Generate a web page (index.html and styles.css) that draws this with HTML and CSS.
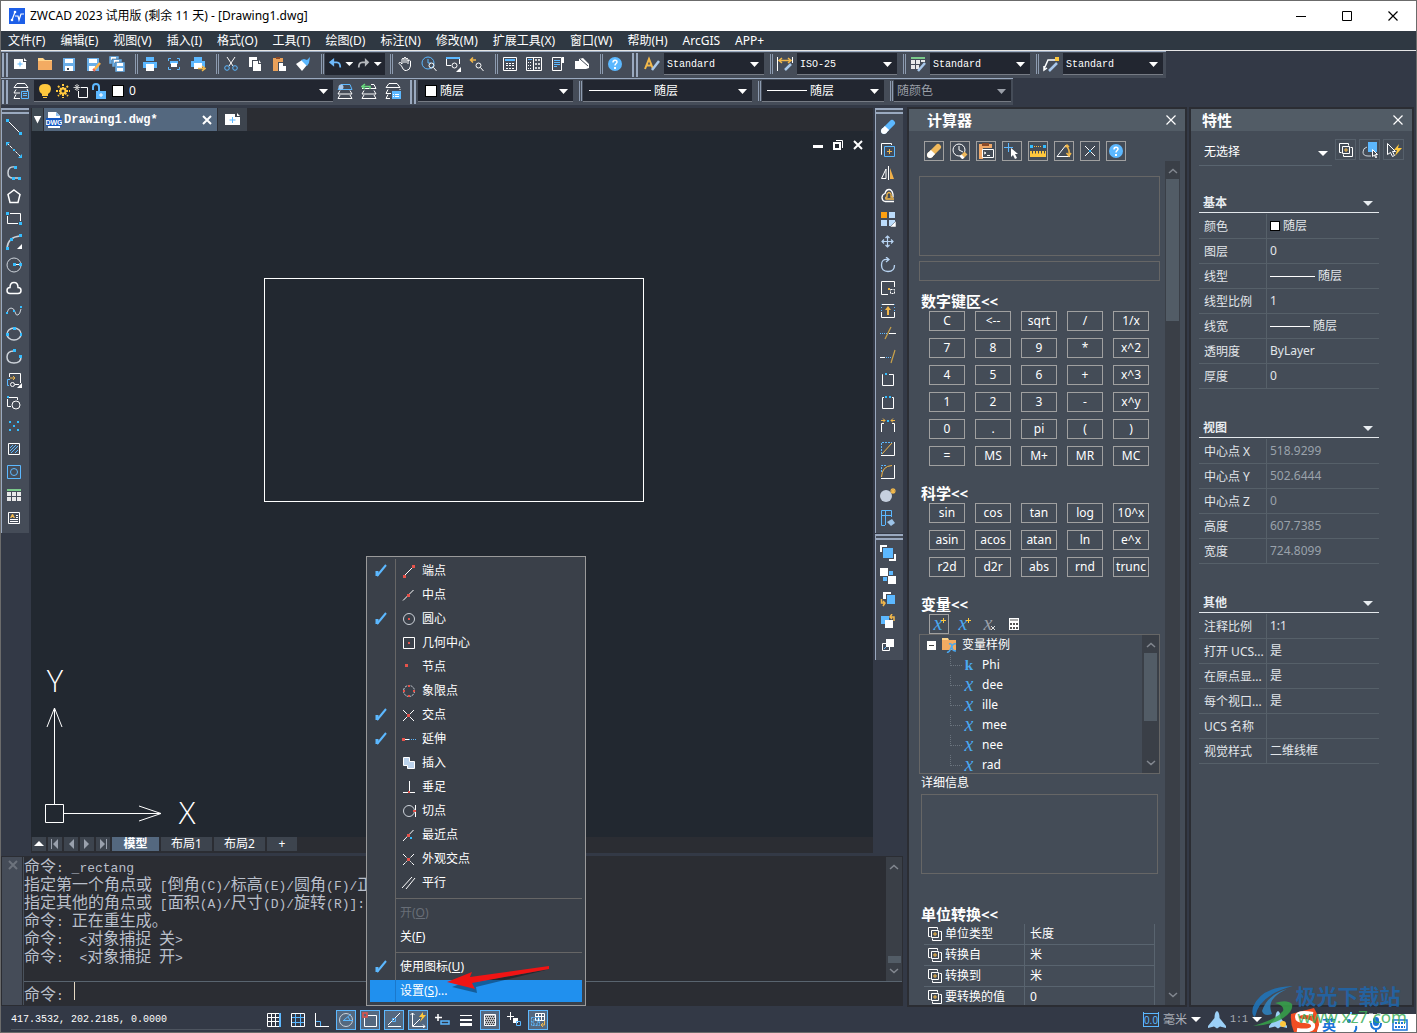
FILE: index.html
```html
<!DOCTYPE html>
<html lang="zh-CN">
<head>
<meta charset="utf-8">
<title>ZWCAD 2023 试用版 (剩余 11 天) - [Drawing1.dwg]</title>
<link rel="stylesheet" href="styles.css">
</head>
<body>
<svg class="defs" aria-hidden="true">
  <symbol id="i-plusboxes" viewBox="0 0 16 16"><path class="s" d="M3.500 10.500h-2v-9h9v2M12.500 5.500h2v9h-9v-2"/><path class="s" d="M4.500 4.500h7v7h-7z"/><path class="sy" d="M8 6v4M6 8h4"/></symbol>
  <symbol id="i-up" viewBox="0 0 10 6"><path d="M1 5l4-3.500 4 3.500" fill="none" stroke="#838890" stroke-width="1.500"/></symbol>
  <symbol id="i-down" viewBox="0 0 10 6"><path d="M1 1l4 3.500 4-3.500" fill="none" stroke="#838890" stroke-width="1.500"/></symbol>
  <symbol id="i-close" viewBox="0 0 12 12"><path d="M1.500 1.500l9 9M10.500 1.500l-9 9" fill="none" stroke="currentColor" stroke-width="1.200"/></symbol>
  <symbol id="i-check" viewBox="0 0 16 16"><path d="M4 8v5" fill="none" stroke="#5cb8ff" stroke-width="3"/><path d="M4 13L13 2" fill="none" stroke="#5cb8ff" stroke-width="2"/></symbol>
  <symbol id="i-printer" viewBox="0 0 16 16"><path class="fb" d="M4 1h8v4H4zM1 6h14v6H1z"/><path class="f" d="M4 8h8v7H4z"/></symbol>
  <symbol id="i-floppy" viewBox="0 0 16 16"><path fill="#6aaee8" d="M2 2h12v13H2z"/><path class="f" d="M4 3h8v4H4zM4 10h8v5H4z"/><path fill="#3d4551" d="M6 12h2v2H6z"/></symbol>
  <symbol id="i-help" viewBox="0 0 16 16"><circle class="fb" cx="8" cy="8" r="7"/><path class="s" stroke-width="1.500" d="M6 6.500c0-3 4-3 4-.5 0 1.500-2 1.500-2 3.500"/><path class="f" d="M7 11h2v2H7z"/></symbol>
  <symbol id="i-compass" viewBox="0 0 18 18"><path fill="#9cd0f7" d="M9 0c2 1 2.500 4 2.500 7l6.500 8v2l-6-1.500-3 2-3-2L0 17v-2l6.500-8C6.500 4 7 1 9 0z"/></symbol>
  <symbol id="i-gear" viewBox="0 0 16 16"><circle class="sb" stroke-width="2" cx="8" cy="8" r="4"/><path class="sb" stroke-width="2" d="M8 0v4M8 12v4M0 8h4M12 8h4M2.500 2.500l3 3M10.500 10.500l3 3M13.500 2.500l-3 3M5.500 10.500l-3 3"/></symbol>
</svg>

<div class="window">
  <header class="titlebar">
    <svg class="logo" viewBox="0 0 16 16"><path fill="#1d5fe8" d="M0 0h16v16H0z"/><path fill="none" stroke="#fff" stroke-width="1.200" d="M3 12l3-8M6 8h3l1 4 2-6h3"/><circle class="f" cx="6" cy="4" r="1.300"/><circle class="f" cx="3" cy="12" r="1.300"/></svg>
    <h1>ZWCAD 2023 试用版 (剩余 11 天) - [Drawing1.dwg]</h1>
    <div class="winbtns">
      <button aria-label="最小化"><svg viewBox="0 0 12 12"><path d="M1 6.500h10" stroke="#000"/></svg></button>
      <button aria-label="最大化"><svg viewBox="0 0 12 12"><path d="M1.500 1.500h9v9h-9z" fill="none" stroke="#000"/></svg></button>
      <button aria-label="关闭"><svg><use href="#i-close"/></svg></button>
    </div>
  </header>
  <nav class="menubar">
    <a href="#">文件(F)</a><a href="#">编辑(E)</a><a href="#">视图(V)</a><a href="#">插入(I)</a><a href="#">格式(O)</a><a href="#">工具(T)</a><a href="#">绘图(D)</a><a href="#">标注(N)</a><a href="#">修改(M)</a><a href="#">扩展工具(X)</a><a href="#">窗口(W)</a><a href="#">帮助(H)</a><a href="#">ArcGIS</a><a href="#">APP+</a>
  </nav>

  <div class="toolbar">
    <i class="grip"></i>
    <button aria-label="新建"><svg viewBox="0 0 16 16"><path class="f" d="M1 3h9v3h3v7H1zM11 2l3 3h-3z"/><path stroke="#5cb8ff" d="M7 5.500v5M4.500 8h5"/></svg></button>
    <button aria-label="打开"><svg viewBox="0 0 16 16"><path fill="#ffd48a" d="M1 2h5l2 2h7v3H1z"/><path fill="#f3ab62" d="M1 5h14v9H1z"/></svg></button>
    <button aria-label="保存"><svg><use href="#i-floppy"/></svg></button>
    <button aria-label="另存为"><svg viewBox="0 0 16 16"><path fill="#6aaee8" d="M2 2h12v13H2z"/><path class="f" d="M4 3h8v4H4zM4 10h6v5H4z"/><path d="M9 14l6-7" stroke="#ffb347" stroke-width="2.500"/><path d="M8 13l2 2" stroke="#e65" stroke-width="2"/></svg></button>
    <button aria-label="全部保存"><svg viewBox="0 0 16 16"><path fill="#6aaee8" stroke="#454c58" stroke-width=".5" d="M0 0h10v8H0z"/><path class="f" d="M2 1h5v3H2z"/><path fill="#6aaee8" stroke="#454c58" stroke-width=".5" d="M3 3h10v8H3z"/><path class="f" d="M5 4h5v3H5z"/><path fill="#6aaee8" stroke="#454c58" stroke-width=".5" d="M6 6h10v10H6z"/><path class="f" d="M8 7h6v3H8zM8 12h6v3H8z"/></svg></button>
    <i class="sep"></i>
    <button aria-label="打印"><svg><use href="#i-printer"/></svg></button>
    <button aria-label="打印预览"><svg viewBox="0 0 16 16"><path class="sb" d="M2.500 5V2.500H5M11 2.500h2.500V5M2.500 11v2.500H5M11 13.500h2.500V11"/><path class="fb" d="M4 5h8v3H4z"/><path class="f" d="M5 7h6v4H5z"/></svg></button>
    <button aria-label="发布"><svg viewBox="0 0 16 16"><path class="fb" d="M4 1h8v4H4zM1 5h14v6H1z"/><path class="f" d="M4 7h8v6H4z"/><path class="sy" stroke-width="1.500" d="M8 12.500h6M12 10l3 2.500-3 2.500"/></svg></button>
    <i class="sep"></i>
    <button aria-label="剪切"><svg viewBox="0 0 16 16"><path class="s" d="M4 1l6 9M12 1L6 10"/><circle class="sb" cx="4" cy="12" r="2.300"/><circle class="sb" cx="12" cy="12" r="2.300"/></svg></button>
    <button aria-label="复制"><svg viewBox="0 0 16 16"><path class="f" d="M2 1h8v3H5v7H2zM6 5h5v3h3v7H6zM12 4l2 3h-2z"/></svg></button>
    <button aria-label="粘贴"><svg viewBox="0 0 16 16"><path fill="#e9a15a" d="M2 2h10v4H7v9H2z"/><path fill="#8a4a2a" d="M5 1h4v2H5z"/><path class="f" d="M8 7h4v3h3v5H8z"/></svg></button>
    <button aria-label="格式刷"><svg viewBox="0 0 16 16"><path class="f" d="M1 8l6-4 5 5-5 6z"/><path class="fb" d="M6 4l3-1 3 1 3-3-1 6-2 3z"/></svg></button>
    <i class="sep"></i>
    <div class="undo">
      <button aria-label="撤销"><svg viewBox="0 0 16 16"><path d="M3 6h7q4 0 4 6" fill="none" stroke="#6fb9fb" stroke-width="2"/><path fill="#6fb9fb" d="M7 1v10L1 6z"/></svg></button><i class="tri"></i>
      <button aria-label="重做"><svg viewBox="0 0 16 16"><path d="M12 6H6q-4 0-4 6" fill="none" stroke="#b5b8bd" stroke-width="2"/><path fill="#b5b8bd" d="M9 1v10l5-5z"/></svg></button><i class="tri"></i>
    </div>
    <i class="sep"></i>
    <button aria-label="平移"><svg viewBox="0 0 16 16"><path class="s" d="M4.500 10L2 7.500Q2 6 3.500 6.500L5 8V3q1-1.500 2 0V2q1-1.500 2 0v1q1-1.500 2 0v2q2-1.500 2.500 0v5q-.5 4-4 4.500H8Q6 14 4.500 10zM7 3v4M9 3v4M11 4v4"/></svg></button>
    <button aria-label="实时缩放"><svg viewBox="0 0 16 16"><circle class="sb" cx="7" cy="7" r="6"/><path class="sb" d="M7 3v4h3"/><circle class="s" cx="10.500" cy="9.500" r="2.500"/><path class="s" d="M12.500 11.500l3 3.500"/></svg></button>
    <button aria-label="窗口缩放"><svg viewBox="0 0 16 16"><path class="fb" d="M1 1h14v2H1z"/><path class="s" d="M1.500 3v6.500H6M14.500 3v5"/><circle class="s" cx="9.500" cy="9.500" r="2.500"/><path class="f" d="M16 11v5h-5z"/></svg></button>
    <button aria-label="缩放上一个"><svg viewBox="0 0 16 16"><path class="sy" stroke-width="1.500" d="M7 4H2M4 1.500L1.500 4 4 6.500"/><circle class="s" cx="9.500" cy="9.500" r="2.500"/><path class="s" d="M11.500 11.500l3 3.500"/></svg></button>
    <i class="sep"></i>
    <button aria-label="特性"><svg viewBox="0 0 16 16"><path class="s" d="M1.500 1.500h13v13h-13z"/><path class="fb" d="M3 3h10v2H3z"/><path d="M4 7.500h8M4 9.500h8M4 12.500h8" stroke="#fff" stroke-dasharray="2 1"/></svg></button>
    <button aria-label="设计中心"><svg viewBox="0 0 16 16"><path class="s" d="M.5 1.500h15v13H.5zM7.500 1v14"/><path class="sb" d="M2 3.500h4"/><path d="M2 6.500h4M2 9.500h4M2 12.500h4" stroke="#fff" stroke-dasharray="1 1"/><path class="s" d="M9.500 3.500h1v1h-1zM12.500 3.500h1v1h-1zM9.500 7.500h1v1h-1zM12.500 7.500h1v1h-1zM9.500 11.500h1v1h-1zM12.500 11.500h1v1h-1z"/></svg></button>
    <button aria-label="工具选项板"><svg viewBox="0 0 16 16"><path class="s" d="M2.500 1.500h9v13h-9z"/><path class="sb" d="M4 4.500h6M4 6.500h6M4 8.500h6M4 10.500h3"/><path class="f" d="M12 1h2v6h-2z"/></svg></button>
    <button aria-label="计算器"><svg viewBox="0 0 16 16"><path class="f" d="M1 5h4V3l4-1 6 6v4l-3 1H1z"/><path stroke="#454c58" d="M6 3l8 7"/></svg></button>
    <i class="sep"></i>
    <button aria-label="帮助"><svg><use href="#i-help"/></svg></button>
    <i class="grip"></i>
    <span class="cell"><svg viewBox="0 0 16 16"><path class="sy" stroke-width="2" d="M1 13L5 3l4 10M2 9.500h6"/><path d="M8 14l7-9" stroke="#a9c8ea" stroke-width="2.500"/></svg></span>
    <span class="combo mono w100"><select aria-label="文字样式"><option>Standard</option></select></span>
    <i class="sep"></i>
    <span class="cell"><svg viewBox="0 0 16 16"><path class="s" d="M.5 1v14M15.500 1v6"/><path class="sy" stroke-width="1.500" d="M2 4.500h12M5 2L2 4.500 5 7M11 2l3 2.500L11 7"/><path d="M8 14l6-6" stroke="#a9c8ea" stroke-width="2.500"/></svg></span>
    <span class="combo mono w100"><select aria-label="标注样式"><option>ISO-25</option></select></span>
    <i class="sep"></i>
    <span class="cell"><svg viewBox="0 0 16 16"><path fill="#7bc98a" d="M1 1h14v2H1z"/><path fill="#e8e8e8" d="M1 4h4v4H1zM6 4h4v4H6zM11 4h4v2h-4zM1 9h4v4H1zM6 9h3v4H6z"/><path d="M8 15l7-8" stroke="#a9c8ea" stroke-width="2.500"/></svg></span>
    <span class="combo mono w100"><select aria-label="表格样式"><option>Standard</option></select></span>
    <i class="sep"></i>
    <span class="cell"><svg viewBox="0 0 16 16"><path class="s" stroke-width="1.500" d="M1 13l4-9h7M1 10v4l3-2"/><path fill="#ffc83d" d="M12 1h4v4h-4z"/><path d="M6 15l8-8" stroke="#a9c8ea" stroke-width="2.500"/></svg></span>
    <span class="combo mono w100"><select aria-label="多重引线样式"><option>Standard</option></select></span>
  </div>

  <div class="toolbar second">
    <i class="grip"></i>
    <button aria-label="图层特性"><svg viewBox="0 0 16 16"><path class="s" d="M4 .5h8l3 4H1zM3 6.500l-2 3.500h6M14 6l1 2M3 11.500l-2 4h6"/><path class="sb" fill="#454c58" d="M8.500 8.500h7v7h-7zM10 10.500h4M10 12.500h4"/></svg></button>
    <span class="combo wlayer">
      <svg viewBox="0 0 16 16"><path fill="#ffc83d" d="M8 1q6 0 6 5 0 3-3 5v2H5v-2Q2 9 2 6q0-5 6-5zM6 14h4v1H6z"/></svg>
      <svg viewBox="0 0 16 16"><circle cx="8" cy="8" r="2.500" fill="none" stroke="#ffc83d" stroke-width="2"/><path stroke="#ffc83d" stroke-width="2" stroke-dasharray="2 1" d="M8 1v4M8 11v4M1 8h4M11 8h4M3 3l3 3M10 10l3 3M13 3l-3 3M6 10l-3 3"/></svg>
      <svg viewBox="0 0 16 16"><path class="s" d="M8 4.500h6.500v10H5.500V8"/><path stroke="#ccc" d="M4 1v7M.5 4.500h7M2 2l4 5M6 2L2 7"/></svg>
      <svg viewBox="0 0 16 16"><path class="sb" stroke-width="2" d="M2 7V4q0-3 3-3t3 3v4"/><path class="fb" d="M5 8h10v8H5z"/><path class="s" d="M10 10v4M8 12h4"/></svg>
      <i class="swatch"></i>
      <select aria-label="图层"><option>0</option></select>
    </span>
    <button aria-label="将对象的图层置为当前"><svg viewBox="0 0 16 16"><path class="s" d="M3 7.500l-2 3.500h14l-2-3.500M3 12l-2 3.500h14L13 12"/><path class="sb" d="M4 1.500h9l2 5H1z"/><circle cx="4" cy="4" r="2.500" fill="#a9c8ea"/></svg></button>
    <button aria-label="上一个图层"><svg viewBox="0 0 16 16"><path class="s" d="M10 1.500h3l2 4H1M3 7.500L1 11h14l-2-3.500M3 12l-2 3.500h14L13 12"/><path stroke="#67d67c" stroke-width="1.500" fill="none" d="M9 6V3.500H1M4 1L1 3.500 4 6"/></svg></button>
    <button aria-label="图层状态"><svg viewBox="0 0 16 16"><path class="s" d="M4 .5h8l3 4H1zM3 6.500l-2 4h5M15 6v1M3 11.500l-2 4h4"/><path class="fb" d="M7 8h9v8H7z"/><path stroke="#fff" stroke-dasharray="1 1 4" d="M8 11.500h7M8 13.500h7"/></svg></button>
    <i class="grip"></i>
    <span class="combo wcolor"><i class="swatch"></i><select aria-label="颜色"><option>随层</option></select></span>
    <i class="sep"></i>
    <span class="combo wline"><i class="rule long"></i><select aria-label="线型"><option>随层</option></select></span>
    <i class="sep"></i>
    <span class="combo wweight"><i class="rule"></i><select aria-label="线宽"><option>随层</option></select></span>
    <i class="sep"></i>
    <span class="combo wplot"><select aria-label="打印样式" disabled><option>随颜色</option></select></span>
  </div>

  <main class="main">
    <div class="work">
      <div class="upper">
        <aside class="side">
          <div class="vbar">
            <button aria-label="直线"><svg viewBox="0 0 16 16"><path class="s" d="M1 1l13 13"/><path class="fc" d="M0 0h3v3H0zM13 13h3v3h-3z"/></svg></button>
            <button aria-label="构造线"><svg viewBox="0 0 16 16"><path class="s" stroke-dasharray="3 1" d="M1 1l14 14"/><path class="fc" d="M0 0h4L0 4zM16 16h-4l4-4zM7 7h2v2H7z"/></svg></button>
            <button aria-label="多段线"><svg viewBox="0 0 16 16"><path class="s g" stroke-width="1.500" d="M9 2Q2 1 2 8q0 5 5 5h7"/><path class="fc" d="M8 1h3v3H8zM6 12h3v3H6zM12 12h3v3h-3z"/></svg></button>
            <button aria-label="正多边形"><svg viewBox="0 0 16 16"><path class="s" stroke-width="1.500" d="M8 2l6 4.500L12 14.500H4L2 6.500z"/></svg></button>
            <button aria-label="矩形"><svg viewBox="0 0 16 16"><path class="s" d="M4 2.500h10.500V10M12 12.500H1.500V5"/><path class="fc" d="M0 1h3v3H0zM13 11h3v3h-3z"/></svg></button>
            <button aria-label="圆弧"><svg viewBox="0 0 16 16"><path class="s g" stroke-width="1.500" d="M1 14Q2 3 14 2"/><path class="fc" d="M0 13h3v3H0zM4 4h3v3H4zM13 0h3v3h-3z"/><path class="f" d="M16 10v5h-5z"/></svg></button>
            <button aria-label="圆"><svg viewBox="0 0 16 16"><circle class="s g" cx="8" cy="8" r="7"/><path class="s" d="M8 7.500h6"/><path class="fc" d="M7 6h3v3H7zM13 6h3v3h-3z"/></svg></button>
            <button aria-label="修订云线"><svg viewBox="0 0 16 16"><path class="s" stroke-width="1.500" d="M4 13.500q-3 0-3-3T4 7.500q0-5 4-5t4 5q3 0 3 3t-3 3z"/></svg></button>
            <button aria-label="样条曲线"><svg viewBox="0 0 16 16"><path class="s g" d="M1 10q1-5 4-5 3 0 4 4t3 3 3-6"/><path class="fc" d="M0 9h2v2H0zM7 7h2v2H7zM14 3h2v2h-2z"/></svg></button>
            <button aria-label="椭圆"><svg viewBox="0 0 16 16"><ellipse class="s g" stroke-width="1.500" cx="8" cy="8" rx="7" ry="6"/><path class="fc" d="M7 1h3v3H7zM0 7h3v3H0zM14 7h2v3h-2z"/></svg></button>
            <button aria-label="椭圆弧"><svg viewBox="0 0 16 16"><path class="s g" stroke-width="1.500" d="M8 2Q1 2 1 8t7 6 7-6"/><path class="fc" d="M7 0h3v3H7zM13 6h3v3h-3z"/></svg></button>
            <button aria-label="插入块"><svg viewBox="0 0 16 16"><path class="s" d="M3.500 5V1.500h11V11"/><path class="sb" d="M4 7.500H1.500v6H3"/><path class="sy" d="M4 6h5M7 4l2 2-2 2"/><circle class="s" cx="6.500" cy="12.500" r="2"/><path class="s" d="M9 12.500h4"/><path class="f" d="M16 11v5h-5z"/></svg></button>
            <button aria-label="创建块"><svg viewBox="0 0 16 16"><path class="s" d="M3 2.500h8.500V5M1.500 4v7.500H5"/><circle class="s" cx="10" cy="10" r="4"/><path class="fc" d="M1 1h2v2H1z"/></svg></button>
            <button aria-label="点"><svg viewBox="0 0 16 16"><path class="fc" d="M3 3h2v2H3zM11 3h2v2h-2zM7 7h2v2H7zM3 11h2v2H3zM11 11h2v2h-2z"/></svg></button>
            <button aria-label="图案填充"><svg viewBox="0 0 16 16"><path class="s" d="M2.500 2.500h11v11h-11z"/><path class="sb" d="M4 7l3-3M4 10l6-6M5 12l7-7M9 12l3-3"/></svg></button>
            <button aria-label="边界"><svg viewBox="0 0 16 16"><path class="sb" d="M1.500 1.500h13v13h-13z"/><circle class="sb" cx="8" cy="8" r="3.500"/></svg></button>
            <button aria-label="表格"><svg viewBox="0 0 16 16"><path fill="#7bc98a" d="M1 2h14v2H1z"/><path fill="#e8e8e8" d="M1 5h4v4H1zM6 5h4v4H6zM11 5h4v4h-4zM1 10h4v4H1zM6 10h4v4H6zM11 10h4v4h-4z"/></svg></button>
            <button aria-label="多行文字"><svg viewBox="0 0 16 16"><path class="s" d="M2.500 2.500h11v11h-11z"/><path class="fy" d="M4 8l2-4h1l2 4H7.500L7 7H6l-.5 1z"/><path class="s" d="M10 5.500h2M10 7.500h2M4 9.500h8M4 11.500h8"/></svg></button>
          </div>
        </aside>

        <section class="doc">
          <div class="doctabs">
            <button class="listbtn" aria-label="文档列表"><i class="tri tall"></i></button>
            <div class="doctab">
              <svg viewBox="0 0 16 16"><path class="f" d="M2 0h8l4 4v12H2z"/><path fill="#8ec0f0" d="M10 0l4 4h-4z"/><path fill="#1358c4" d="M0 6h16v8H0z"/><text class="dwg" x="8" y="13">DWG</text></svg>
              <span>Drawing1.dwg*</span>
              <button aria-label="关闭文档"><svg viewBox="0 0 12 12"><path d="M2 2l8 8M10 2l-8 8" stroke="#fff" stroke-width="2"/></svg></button>
            </div>
            <button class="newtab" aria-label="新建文档"><svg viewBox="0 0 16 16"><path class="f" d="M0 2h10v3h5v8H0zM12 1l3 3h-3z"/><path stroke="#5cb8ff" d="M7.500 5v6M4.500 8h6"/></svg></button>
          </div>
          <div class="canvas">
            <svg class="drawing" width="100%" height="100%">
              <rect class="s" x="233.500" y="147.500" width="379" height="223"/>
              <svg y="100%" overflow="visible">
                <path class="s" d="M14.500 -32.500h18v18h-18zM23.500 -33v-96M16 -110l7.500 -19 7.500 19M33 -23.500h97M108 -31l22 7.500 -22 7.500"/>
                <text class="axis" x="24" y="-145">Y</text>
                <text class="axis" x="156" y="-13">X</text>
              </svg>
            </svg>
            <div class="mdi">
              <button aria-label="最小化文档"><svg viewBox="0 0 12 12"><path class="f" d="M1 6h10v3H1z"/></svg></button>
              <button aria-label="还原文档"><svg viewBox="0 0 12 12"><path fill="none" stroke="#fff" stroke-width="2" d="M2 4h6v6H2z"/><path class="s" d="M4 1.500h6.500V9"/></svg></button>
              <button aria-label="关闭文档窗口"><svg viewBox="0 0 12 12"><path d="M2 2l8 8M10 2l-8 8" stroke="#fff" stroke-width="2"/></svg></button>
            </div>
          </div>
          <div class="layouts">
            <button class="nav" aria-label="展开"><svg viewBox="0 0 10 10"><path class="f" d="M5 2l5 5H0z"/></svg></button>
            <button class="nav" aria-label="第一个"><svg viewBox="0 0 10 10"><path d="M1 0h1v10H1zM8 0v10L3 5z"/></svg></button>
            <button class="nav" aria-label="上一个"><svg viewBox="0 0 10 10"><path d="M8 0v10L3 5z"/></svg></button>
            <button class="nav" aria-label="下一个"><svg viewBox="0 0 10 10"><path d="M2 0v10l5-5z"/></svg></button>
            <button class="nav" aria-label="最后一个"><svg viewBox="0 0 10 10"><path d="M8 0h1v10H8zM2 0v10l5-5z"/></svg></button>
            <button class="lay on">模型</button><button class="lay">布局1</button><button class="lay">布局2</button><button class="lay add">+</button>
          </div>
        </section>

        <aside class="side">
          <div class="vbar">
            <button aria-label="删除"><svg viewBox="0 0 16 16"><path d="M4 12l8-8" stroke="#5cb8ff" stroke-width="6" stroke-linecap="round"/><path d="M4 12l3-3" stroke="#fff" stroke-width="6"/><circle class="f" cx="4" cy="12" r="3"/></svg></button>
            <button aria-label="复制对象"><svg viewBox="0 0 16 16"><path class="s" d="M2 12.500h-.5v-11h10V3"/><path class="sb" d="M4.500 4.500h10v10h-10z"/><path class="sy" d="M9.500 7v5M7 9.500h5"/></svg></button>
            <button aria-label="镜像"><svg viewBox="0 0 16 16"><path class="s" d="M1.500 13.500H6V4zM8.500 1v14"/><path fill="#f0b04a" d="M10 3l4 11h-4z"/></svg></button>
            <button aria-label="偏移"><svg viewBox="0 0 16 16"><path class="s" stroke-width="1.300" d="M14 13.500H5q-3-1-3-4t3-4q1-4 4-4t4 5v3"/><path class="sy" stroke-width="1.300" d="M14 11H6q-1-2 1-2V6q1-1.500 2-1.500T11 6v3h2"/></svg></button>
            <button aria-label="阵列"><svg viewBox="0 0 16 16"><path fill="#ffa010" d="M1 1h6v6H1z"/><path fill="#bcdcfb" d="M9 1h6v6H9zM1 9h6v6H1zM9 9h6v6H9z"/><path class="f" stroke="#454c58" stroke-width=".5" d="M16 10v6h-6z"/></svg></button>
            <button aria-label="移动"><svg viewBox="0 0 16 16"><path fill="none" stroke="#b8d4f2" stroke-width="1.200" d="M7.500 2v11M2 7.500h11M5.500 4l2-2 2 2M5.500 11l2 2 2-2M4 5.500l-2 2 2 2M11 5.500l2 2-2 2"/></svg></button>
            <button aria-label="旋转"><svg viewBox="0 0 16 16"><path fill="none" stroke="#b8d4f2" stroke-width="1.300" d="M14.500 8q0 6.500-6.500 6.500T1.500 8 8 2.500M6 0l3 2.500L6 5"/></svg></button>
            <button aria-label="缩放"><svg viewBox="0 0 16 16"><path class="s" d="M8 14.500H1.500v-13h13V7"/><path class="s" stroke-dasharray="2 1" d="M10.500 9.500h4v4h-4z"/><path class="fy" d="M8 8h2v2H8z"/></svg></button>
            <button aria-label="拉伸"><svg viewBox="0 0 16 16"><path class="s" d="M1.500 9v5.500h13V9"/><path class="sb" stroke-dasharray="1 2" d="M1.500 8V1.500M14.500 8V1.500"/><path class="s" d="M2 1.500h12"/><path class="fy" d="M8 3l3 4H9v5H7V7H5z"/></svg></button>
            <button aria-label="修剪"><svg viewBox="0 0 16 16"><path class="sb" stroke-dasharray="1 1" d="M0 7.500h8"/><path class="s" d="M9 7.500h7"/><path d="M5 13L11 1" stroke="#c8a14b" stroke-width="1.200"/></svg></button>
            <button aria-label="延伸"><svg viewBox="0 0 16 16"><path class="s" d="M0 8.500h5"/><path class="sb" stroke-dasharray="1 1" d="M6 8.500h5"/><path d="M11 14l4-13" stroke="#c8a14b" stroke-width="1.200"/></svg></button>
            <button aria-label="打断于点"><svg viewBox="0 0 16 16"><path class="s" d="M3 2.500h-.5v11h11v-11H9"/><path class="fc" d="M5 1h2v2H5z"/></svg></button>
            <button aria-label="打断"><svg viewBox="0 0 16 16"><path class="s" d="M4 2.500H2.500v11h11v-11H12"/><path class="fc" d="M5 1h2v2H5zM9 1h2v2H9z"/></svg></button>
            <button aria-label="合并"><svg viewBox="0 0 16 16"><path class="s" d="M1.500 14V5.500H4M14.500 14V5.500H12"/><path class="sy" d="M1 2.500h4M3 .5l2 2-2 2M15 2.500h-4M13 .5l-2 2 2 2"/><path class="fc" d="M7 2h2v2H7z"/></svg></button>
            <button aria-label="倒角"><svg viewBox="0 0 16 16"><path class="sb" stroke-dasharray="2 1" d="M1.500 13V1.500H12"/><path class="s" d="M1 14.500h13.500V1"/><path class="sy" d="M2 13L12 2"/></svg></button>
            <button aria-label="圆角"><svg viewBox="0 0 16 16"><path class="sb" stroke-dasharray="2 1" d="M1.500 8V1.500H6"/><path class="s" d="M1 14.500h13.500V1"/><path class="sy" d="M1.500 13Q2 2 12 1.500"/></svg></button>
            <button aria-label="分解"><svg viewBox="0 0 16 16"><circle cx="6" cy="9" r="6" fill="#c6d0df"/><path class="sy" stroke-width="1.200" d="M13 1v6M10 4h6M11 2l4 4M15 2l-4 4"/></svg></button>
            <button aria-label="特性匹配"><svg viewBox="0 0 16 16"><path class="sb" d="M5 15.500H1.500v-15h10V7M1.500 5.500h10M5.500 1v14"/><path fill="#9cc3e8" d="M7 12l5-3 3 4-4 3z"/></svg></button>
          </div>
          <div class="vbar">
            <button aria-label="前置"><svg viewBox="0 0 16 16"><path stroke="#fff" stroke-width="2" fill="none" d="M1 7V1h6M9 15h6V9"/><path class="fb" d="M3 3h10v10H3z"/></svg></button>
            <button aria-label="后置"><svg viewBox="0 0 16 16"><path class="f" d="M0 0h8v8H0zM8 8h8v8H8z"/><path class="fb" d="M9 3h4v4H9zM3 9h4v4H3z"/></svg></button>
            <button aria-label="置于对象之上"><svg viewBox="0 0 16 16"><path class="f" d="M3 1h8v2H6v5H3z"/><path class="fb" d="M7 4h8v9H7z"/><path class="sy" stroke-width="1.500" d="M1.500 8v4H5M3 10l2 2-2 3"/></svg></button>
            <button aria-label="置于对象之下"><svg viewBox="0 0 16 16"><path class="fb" d="M1 2h8v8H1z"/><path class="f" d="M5 6h8v8H5z"/><path class="sy" stroke-width="1.500" d="M14 7V3h-3M12 0l-2 3 2 2"/></svg></button>
            <button aria-label="文字前置"><svg viewBox="0 0 16 16"><path class="s" d="M6 6.500H2.500v7h7V10"/><path class="sb" d="M4 12l4-4"/><path class="f" d="M6 2h8v8H6z"/></svg></button>
          </div>
        </aside>
      </div>

      <section class="command">
        <div class="cmdclose"><button aria-label="关闭命令行"><svg viewBox="0 0 12 12"><path d="M2 2l8 8M10 2l-8 8" stroke="#6d737d" stroke-width="2"/></svg></button></div>
        <div class="cmdbody">
          <div class="history">
            <div class="lines">
              <p>命令<code>: _rectang</code></p>
              <p>指定第一个角点或<code> [</code>倒角<code>(C)/</code>标高<code>(E)/</code>圆角<code>(F)/</code>正</p>
              <p>指定其他的角点或<code> [</code>面积<code>(A)/</code>尺寸<code>(D)/</code>旋转<code>(R)]:</code></p>
              <p>命令<code>: </code>正在重生成。</p>
              <p>命令<code>:  &lt;</code>对象捕捉<code> </code>关<code>&gt;</code></p>
              <p>命令<code>:  &lt;</code>对象捕捉<code> </code>开<code>&gt;</code></p>
            </div>
            <div class="scroll"><svg><use href="#i-up"/></svg><i class="space"></i><i class="thumb tiny"></i><svg><use href="#i-down"/></svg></div>
          </div>
          <div class="prompt"><label for="cmd">命令<code>:</code></label><i class="caret"></i><input id="cmd" type="text"></div>
        </div>
      </section>
    </div>

    <section class="panel calc">
      <header><h2>计算器</h2><button aria-label="关闭计算器"><svg><use href="#i-close"/></svg></button></header>
      <div class="calcwrap">
        <div class="calcbody">
          <div class="calctools">
            <button aria-label="清除"><svg viewBox="0 0 16 16"><path d="M4 12l8-8" stroke="#f0b95c" stroke-width="6" stroke-linecap="round"/><path d="M4 12l3-3" stroke="#fff" stroke-width="6"/><circle class="f" cx="4" cy="12" r="3"/></svg></button>
            <button aria-label="清除历史"><svg viewBox="0 0 16 16"><circle class="s" cx="7" cy="7" r="6"/><path class="s" d="M7 3v4l4 2"/><path d="M10 14l4-4" stroke="#f0b95c" stroke-width="4"/><path d="M9 15l2-2" stroke="#fff" stroke-width="4"/></svg></button>
            <button aria-label="粘贴到命令行"><svg viewBox="0 0 16 16"><path fill="#f0a868" d="M1 1h13v4H5v11H1z"/><path fill="#8a4a2a" d="M4 0h7v3H4z"/><path class="s" fill="#3a4049" d="M4.500 6.500h11v8h-11zM6 9l2 1-2 1M9 12.500h3"/></svg></button>
            <button aria-label="获取坐标"><svg viewBox="0 0 16 16"><path class="sb" d="M4.500 0v9M0 4.500h9"/><path class="f" d="M7 5v9l2-2 2 4 2-1-2-4h3z"/></svg></button>
            <button aria-label="两点之间的距离"><svg viewBox="0 0 16 16"><path class="fc" d="M0 2h3v3H0zM13 2h3v3h-3z"/><path class="sy" stroke-dasharray="1 1" d="M4 3.500h8"/><path fill="#ffc83d" d="M0 8h16v6H0z"/><path stroke="#444c57" stroke-dasharray="1 2" stroke-width="3" d="M2 9h13"/></svg></button>
            <button aria-label="角度"><svg viewBox="0 0 16 16"><path class="s" d="M10 2L1 13.500h13"/><path class="sy" stroke-width="1.500" d="M10 3q4 3 3 9M9 4l2-2 2 2M10.500 10l2.500 3 2-3"/></svg></button>
            <button aria-label="交点"><svg viewBox="0 0 16 16"><path class="s" d="M3 3l10 10M13 3L3 13"/><path class="fc" d="M7 7h2v2H7z"/></svg></button>
            <button aria-label="计算器帮助"><svg><use href="#i-help"/></svg></button>
          </div>
          <textarea class="display" aria-label="历史记录" readonly></textarea>
          <input class="entry" type="text" aria-label="输入">
          <h3>数字键区&lt;&lt;</h3>
          <div class="keys">
            <button>C</button><button>&lt;--</button><button>sqrt</button><button>/</button><button>1/x</button>
            <button>7</button><button>8</button><button>9</button><button>*</button><button>x^2</button>
            <button>4</button><button>5</button><button>6</button><button>+</button><button>x^3</button>
            <button>1</button><button>2</button><button>3</button><button>-</button><button>x^y</button>
            <button>0</button><button>.</button><button>pi</button><button>(</button><button>)</button>
            <button>=</button><button>MS</button><button>M+</button><button>MR</button><button>MC</button>
          </div>
          <h3>科学&lt;&lt;</h3>
          <div class="keys">
            <button>sin</button><button>cos</button><button>tan</button><button>log</button><button>10^x</button>
            <button>asin</button><button>acos</button><button>atan</button><button>ln</button><button>e^x</button>
            <button>r2d</button><button>d2r</button><button>abs</button><button>rnd</button><button>trunc</button>
          </div>
          <h3>变量&lt;&lt;</h3>
          <div class="vartools">
            <button class="on" aria-label="新建变量"><em>x</em><svg viewBox="0 0 18 18"><path stroke="#ffc83d" d="M13.500 3v5M11 5.500h5"/></svg></button>
            <button aria-label="编辑变量"><em>x</em><svg viewBox="0 0 18 18"><path stroke="#ffc83d" d="M13.500 3v5M11 5.500h5"/></svg></button>
            <button aria-label="删除变量"><em class="gray">x</em><svg viewBox="0 0 18 18"><path stroke="#ddd" d="M11 11l4 4M15 11l-4 4"/></svg></button>
            <button aria-label="返回到输入区"><svg viewBox="0 0 18 18"><path class="f" d="M4 3h10v12H4z"/><path fill="#aaa" d="M5 4h8v2H5z"/><path stroke="#555" stroke-width="2" stroke-dasharray="2 1" d="M5 9h8M5 13h8"/></svg></button>
          </div>
          <div class="tree">
            <ul>
              <li class="root"><i class="minus"></i><svg viewBox="0 0 16 16"><path fill="#ffd48a" d="M1 1h6l1 2h7v2H1z"/><path fill="#f3ab62" d="M1 3h14v10H1z"/><path d="M6 15q2 1 4-4t5-4M8 7q3-1 3 3t4 4" fill="none" stroke="#4aa8f0" stroke-width="1.500"/></svg>变量样例</li>
              <li><b class="k">k</b>Phi</li>
              <li><em>x</em>dee</li>
              <li><em>x</em>ille</li>
              <li><em>x</em>mee</li>
              <li><em>x</em>nee</li>
              <li><em>x</em>rad</li>
            </ul>
            <div class="scroll"><svg><use href="#i-up"/></svg><i class="thumb mid"></i><i class="space"></i><svg><use href="#i-down"/></svg></div>
          </div>
          <label class="dlabel" for="details">详细信息</label>
          <textarea class="details" id="details" readonly></textarea>
          <h3 class="units">单位转换&lt;&lt;</h3>
          <table class="unit">
            <tr><th><svg><use href="#i-plusboxes"/></svg>单位类型</th><td>长度</td></tr>
            <tr><th><svg><use href="#i-plusboxes"/></svg>转换自</th><td>米</td></tr>
            <tr><th><svg><use href="#i-plusboxes"/></svg>转换到</th><td>米</td></tr>
            <tr><th><svg><use href="#i-plusboxes"/></svg>要转换的值</th><td>0</td></tr>
          </table>
        </div>
        <div class="scroll outer"><svg><use href="#i-up"/></svg><i class="thumb big"></i><i class="space"></i><svg><use href="#i-down"/></svg></div>
      </div>
    </section>

    <section class="panel props">
      <header><h2>特性</h2><button aria-label="关闭特性"><svg><use href="#i-close"/></svg></button></header>
      <div class="pick">
        <span class="combo plain"><select aria-label="选择对象"><option>无选择</option></select></span>
        <button aria-label="切换PICKADD"><svg><use href="#i-plusboxes"/></svg></button>
        <button aria-label="选择对象"><svg viewBox="0 0 16 16"><path class="s g" d="M5 5Q1 6 1 10t5 4h3"/><path class="fb" d="M6 0h9v10H6z"/><path fill="#444c57" stroke="#fff" d="M10.500 7.500v7l2-1.500 1 2.500h1l-1-3h2z"/></svg></button>
        <button aria-label="快速选择"><svg viewBox="0 0 16 16"><path class="s" d="M1.500 1.500v11l3-2 2 4 2-1-2-4h3z"/><path fill="#ffc83d" d="M13 2l-5 6h3l-2 6 7-8h-4z"/></svg></button>
      </div>
      <h3>基本<i class="tri"></i></h3>
      <table>
        <tr><th>颜色</th><td><i class="swatch"></i>随层</td></tr>
        <tr><th>图层</th><td>0</td></tr>
        <tr><th>线型</th><td><i class="rule"></i>随层</td></tr>
        <tr><th>线型比例</th><td>1</td></tr>
        <tr><th>线宽</th><td><i class="rule short"></i>随层</td></tr>
        <tr><th>透明度</th><td>ByLayer</td></tr>
        <tr><th>厚度</th><td>0</td></tr>
      </table>
      <h3>视图<i class="tri"></i></h3>
      <table class="dim">
        <tr><th>中心点 X</th><td>518.9299</td></tr>
        <tr><th>中心点 Y</th><td>502.6444</td></tr>
        <tr><th>中心点 Z</th><td>0</td></tr>
        <tr><th>高度</th><td>607.7385</td></tr>
        <tr><th>宽度</th><td>724.8099</td></tr>
      </table>
      <h3>其他<i class="tri"></i></h3>
      <table>
        <tr><th>注释比例</th><td>1:1</td></tr>
        <tr><th>打开 UCS...</th><td>是</td></tr>
        <tr><th>在原点显...</th><td>是</td></tr>
        <tr><th>每个视口...</th><td>是</td></tr>
        <tr><th>UCS 名称</th><td></td></tr>
        <tr><th>视觉样式</th><td>二维线框</td></tr>
      </table>
    </section>
  </main>

  <footer class="status">
    <output class="coords">417.3532, 202.2185, 0.0000</output>
    <div class="modes">
      <button aria-label="捕捉"><svg viewBox="0 0 16 16"><path class="s" d="M1.500 1.500h13v13h-13zM5.500 1v14M9.500 1v14M1 5.500h14M1 9.500h14"/><path stroke="#5cb8ff" stroke-width="2" d="M14 1v14"/></svg></button>
      <button aria-label="栅格"><svg viewBox="0 0 16 16"><path class="sb" d="M5.500 1v14M10.500 1v14M1 5.500h14M1 10.500h14"/><path class="s" d="M1.500 1.500h13v13h-13z"/></svg></button>
      <button aria-label="正交"><svg viewBox="0 0 16 16"><path class="s" d="M1.500 1v13.500H15"/><path class="sb" d="M2 9.500h4.500V14"/></svg></button>
      <button class="on" aria-label="极轴"><svg viewBox="0 0 16 16"><circle class="s g" cx="8" cy="8" r="6.500"/><path class="sb" d="M5 8.500h10M6 8l7-6M10 5l2 3"/></svg></button>
      <button class="on" aria-label="对象捕捉"><svg viewBox="0 0 16 16"><path class="s" d="M6 3.500h8.500v11h-12V6"/><path fill="none" stroke="#e5534b" stroke-width="1.500" d="M1 1h4v4H1z"/></svg></button>
      <button class="on" aria-label="对象追踪"><svg viewBox="0 0 16 16"><path class="s" d="M2 14.500h13M2 13L14 1"/><path class="sb" d="M6.500 6.500h3v3h-3z"/></svg></button>
      <button class="on" aria-label="动态UCS"><svg viewBox="0 0 16 16"><path class="s" d="M2.500 1v13.500H15M.5 3l2-2 2 2M13 12.500l2 2-2 1.500M3 14l7-7"/><path fill="#ffc83d" d="M13 0L9 5h3l-2 5 6-7h-3z"/></svg></button>
      <button aria-label="动态输入"><svg viewBox="0 0 16 16"><path class="s" stroke-width="1.500" d="M4 2v7M1 5.500h7"/><path class="sb" stroke-width="1.500" d="M7 9h8v3H7z"/></svg></button>
      <button aria-label="线宽显示"><svg viewBox="0 0 16 16"><path class="f" d="M2 3h12v1H2zM2 7h12v2H2zM2 11h12v3H2z"/></svg></button>
      <button class="on" aria-label="透明度"><svg viewBox="0 0 16 16"><path fill="#b4b8bd" stroke="#fff" d="M2.500 2.500h11v11h-11z"/><path stroke="#333" stroke-dasharray="1 1" d="M3 4.500h10M4 6.500h9M3 8.500h10M4 10.500h9M3 12.500h10"/></svg></button>
      <button aria-label="选择循环"><svg viewBox="0 0 16 16"><path class="s" d="M4.500 0v8M1 4.500h7"/><path class="f" d="M7 6h5v5H7z"/><path class="sb" fill="#333946" d="M10.500 9.500h4v4h-4z"/></svg></button>
      <button class="on" aria-label="注释监视"><svg viewBox="0 0 16 16"><path class="s" d="M5.500 1.500h9v7h-9zM8.500 1v8M11.500 1v8M5 4.500h9"/><path class="sb" stroke-dasharray="2 1" d="M1.500 5.500h8v8h-8zM3 8h5v4H3z"/><path class="sy" d="M14.500 9v4H11M13 11l-2 2 2 2"/></svg></button>
    </div>
    <div class="units-status">
      <svg viewBox="0 0 16 16"><path class="sb" d="M.5 0v15M15.500 0v15M0 1.500h16M0 14.500h16"/><text class="prec" x="8" y="12">0.0</text></svg>
      <span>毫米</span><i class="tri"></i>
      <svg class="glyph"><use href="#i-compass"/></svg><span class="mono">1:1</span><i class="tri"></i>
      <svg class="glyph" viewBox="0 0 18 18"><use href="#i-compass"/><circle cx="14" cy="13" r="3" fill="#ffc83d"/></svg>
      <svg class="far"><use href="#i-gear"/></svg>
      <svg class="far" viewBox="0 0 16 16"><circle class="s" cx="8" cy="6" r="4"/></svg>
      <svg class="far"><use href="#i-gear"/></svg>
      <svg class="far" viewBox="0 0 16 16"><path class="s" d="M2 6V2h4M10 2h4v4M2 2l4 4M14 2l-4 4"/></svg>
      <svg class="far" viewBox="0 0 16 16"><path class="fb" d="M2 2h13v2H2z"/></svg>
    </div>
  </footer>

  <div class="popup" role="menu">
    <button role="menuitem"><svg><use href="#i-check"/></svg><svg viewBox="0 0 16 16"><path class="s" d="M3 13L13 3"/><path class="fr" d="M2 12h3v3H2zM11 2h3v3h-3z"/></svg>端点</button>
    <button role="menuitem"><i></i><svg viewBox="0 0 16 16"><path class="s" d="M2 13.500L12.500 3"/><path class="fr" d="M6 7h3v3H6z"/></svg>中点</button>
    <button role="menuitem"><svg><use href="#i-check"/></svg><svg viewBox="0 0 16 16"><circle class="s g" cx="8" cy="8" r="5.500"/><path class="fr" d="M7 7h2v2H7z"/></svg>圆心</button>
    <button role="menuitem"><i></i><svg viewBox="0 0 16 16"><path class="s" d="M2.500 2.500h11v11h-11z"/><path class="fr" d="M7 7h2v2H7z"/></svg>几何中心</button>
    <button role="menuitem"><i></i><svg viewBox="0 0 16 16"><path class="fr" d="M4 5h3v3H4z"/></svg>节点</button>
    <button role="menuitem"><i></i><svg viewBox="0 0 16 16"><circle class="s g" stroke-dasharray="2 1" cx="8" cy="8" r="5.500"/><path class="fr" d="M7 2h2v2H7zM7 12h2v2H7zM2 7h2v2H2zM12 7h2v2h-2z"/></svg>象限点</button>
    <button role="menuitem"><svg><use href="#i-check"/></svg><svg viewBox="0 0 16 16"><path class="s" d="M2 3l11 11M13 3L2 14"/><path class="fr" d="M6 7h3v3H6z"/></svg>交点</button>
    <button role="menuitem"><svg><use href="#i-check"/></svg><svg viewBox="0 0 16 16"><path class="s" d="M3 8.500h5"/><path class="sb" stroke-dasharray="1 1" d="M8 8.500h7"/><path class="fr" d="M1 7h3v3H1z"/></svg>延伸</button>
    <button role="menuitem"><i></i><svg viewBox="0 0 16 16"><path fill="#bcd3ec" stroke="#fff" d="M2.500 2.500h6v4h5v7h-7v-3h-4z"/></svg>插入</button>
    <button role="menuitem"><i></i><svg viewBox="0 0 16 16"><path class="s" d="M2 13.500h12M8.500 2v11"/><path class="fr" d="M7 12h2v2H7z"/></svg>垂足</button>
    <button role="menuitem"><i></i><svg viewBox="0 0 16 16"><circle class="s g" cx="8" cy="8" r="5.500"/><path class="s" d="M14.500 2v12"/><path class="fr" d="M12 7h3v2h-3z"/></svg>切点</button>
    <button role="menuitem"><i></i><svg viewBox="0 0 16 16"><path class="s" d="M2 14L12.500 3"/><path class="fr" d="M6 7h3v3H6z"/><path class="fc" d="M9 10h2v2H9z"/></svg>最近点</button>
    <button role="menuitem"><i></i><svg viewBox="0 0 16 16"><path class="s" stroke-dasharray="5 1" d="M2 3l11 11M13 3L2 14"/><path class="fr" d="M6 7h3v3H6z"/></svg>外观交点</button>
    <button role="menuitem"><i></i><svg viewBox="0 0 16 16"><path class="s" d="M1 13L11 2M5 14L14 3"/></svg>平行</button>
    <hr>
    <button role="menuitem" disabled><i></i><span>开(<u>O</u>)</span></button>
    <button role="menuitem"><i></i><span>关(<u>F</u>)</span></button>
    <hr>
    <button role="menuitem"><svg><use href="#i-check"/></svg><span>使用图标(<u>U</u>)</span></button>
    <button role="menuitem" class="hot"><i></i><span>设置(<u>S</u>)...</span></button>
    <svg class="arrow" viewBox="0 0 110 30"><path fill="#000" opacity=".35" d="M6 24l26-10-3 5 75-13-74 18 1 6z"/><path fill="#f01414" d="M1 19l25-10-2 5 79-11v3l-77 14 3 6z"/></svg>
  </div>

  <div class="ime">
    <svg class="sogou" viewBox="0 0 30 26"><path fill="#f04e23" d="M1 6l23-6q5 8 5 17l-3 9H5Q0 17 1 6z"/><path fill="none" stroke="#fff" stroke-width="4" d="M23 6q-16-3-16 3 0 4 8 4 9 1 8 6-2 5-16 3"/></svg>
    <b>英</b>
    <svg viewBox="0 0 16 16"><circle cx="5" cy="4" r="2" fill="#1a73d9"/><path fill="none" stroke="#1a73d9" stroke-width="2" d="M12 9q1 4-2 6"/></svg>
    <svg viewBox="0 0 16 16"><rect x="5" y="0" width="6" height="9" rx="3" fill="#1a73d9"/><path fill="none" stroke="#1a73d9" stroke-width="2" d="M3 6q0 6 5 6t5-6M8 12v3"/></svg>
    <svg viewBox="0 0 16 16"><path fill="none" stroke="#1a73d9" stroke-width="1.500" d="M1 3h14v10H1z"/><path stroke="#1a73d9" stroke-width="2" stroke-dasharray="2 1" d="M3 6h10M3 10h10"/></svg>
  </div>

  <div class="watermark">
    <svg viewBox="0 0 44 42"><path fill="#1f76bd" d="M42 1Q10 2 2 22q-2 8 2 10Q8 10 42 1z"/><path fill="#2f86c4" d="M36 4Q16 10 11 26q2 6 10 3Q14 14 36 4z"/><path fill="#37a34a" d="M24 18q12-4 17 1 2 8-12 16-10 5-27 6 24-7 30-15 2-5-8-8z"/></svg>
    <div><b>极光下载站</b><span>www.xz7.com</span></div>
  </div>
</div>
</body>
</html>
```
FILE: styles.css
```css
:root {
  --ui: "Noto Sans", "Noto Sans CJK SC", sans-serif;
  --mono: "Liberation Mono", "Noto Sans CJK SC", monospace;
  --frame: #333946;
  --bar: #454c58;
  --panel: #444c57;
  --field: #222630;
  --dark: #2b2d33;
  --edge: #9aa9bf;
  --rule: #59646f;
  --blue: #5cb8ff;
}

* { box-sizing: border-box; }

body {
  margin: 0;
  font: 12px/16px var(--ui);
  color: #fff;
}

button, select, input, textarea {
  font: inherit;
  color: inherit;
  background: none;
  border: 0;
  border-radius: 0;
  padding: 0;
  margin: 0;
  outline: 0;
  resize: none;
}

i { font-style: normal; flex: none; }
svg { display: block; flex: none; width: 16px; height: 16px; }
h1, h2, h3, p, ul { margin: 0; padding: 0; font-size: inherit; font-weight: normal; list-style: none; }
.defs { width: 0; height: 0; position: absolute; }

/* icon paints */
.s { fill: none; stroke: #fff; }
.s.g { stroke: #cdd3da; }
.sb { fill: none; stroke: #5cb8ff; }
.sy { fill: none; stroke: #f2b84b; }
.f { fill: #fff; }
.fb { fill: #5cb8ff; }
.fc { fill: #35bdff; }
.fy { fill: #f2b84b; }
.fr { fill: #e5534b; }
.dwg { fill: #fff; font: bold 7px "Liberation Sans", sans-serif; text-anchor: middle; }
.prec { fill: #5cb8ff; font: 10px "Liberation Sans", sans-serif; text-anchor: middle; }

.window {
  position: relative;
  display: flex;
  flex-direction: column;
  min-height: 100vh;
  background: var(--frame);
  border: 1px solid #6b6b6b;
  overflow: hidden;
}

/* title and menu */
.titlebar {
  display: flex;
  align-items: center;
  gap: 5px;
  height: 30px;
  padding-left: 8px;
  background: #fff;
  color: #000;
}
.titlebar h1 { flex: 1; }
.winbtns { display: flex; }
.winbtns button { width: 46px; height: 28px; display: grid; place-items: center; }
.winbtns svg { width: 12px; height: 12px; }

.menubar {
  display: flex;
  gap: 15px;
  height: 20px;
  padding-left: 7px;
  background: #2f3842;
  border-bottom: 1px solid #e6e6e6;
  line-height: 19px;
}
.menubar a { color: #fff; text-decoration: none; white-space: nowrap; }

/* horizontal toolbars */
.toolbar {
  display: flex;
  align-self: flex-start;
  height: 27px;
  padding: 1px 3px 3px 1px;
  background: var(--bar);
  border-top: 1px solid var(--edge);
}
.toolbar.second { padding-right: 2px; }
.toolbar > button, .cell { width: 24px; height: 22px; display: grid; place-items: center; flex: none; }
.grip {
  width: 6px;
  height: 24px;
  margin: 0 1px 0 5px;
  border: solid var(--edge);
  border-width: 0 2px;
}
.grip:first-child { margin-left: 0; }
.toolbar:not(.second) .grip:not(:first-child) { margin-right: 2px; }
.sep {
  width: 3px;
  height: 20px;
  margin: 1px 0 1px 6px;
  border: solid #8d9bb0;
  border-width: 0 1px;
}
.undo {
  display: flex;
  align-items: center;
  justify-content: space-evenly;
  width: 60px;
  margin-left: 1px;
  background: var(--field);
}
.undo + .sep { margin-left: 5px; }
.undo svg { width: 14px; height: 14px; }
.tri {
  width: 10px;
  height: 5px;
  background: #fff;
  clip-path: polygon(0 0, 100% 0, 50% 100%);
}
.undo .tri { width: 8px; height: 4px; }
.tri.tall { width: 8px; height: 8px; }

.combo {
  position: relative;
  display: flex;
  align-items: center;
  height: 22px;
  flex: none;
  background: var(--field);
  border-bottom: 1px solid #767b84;
}
.second .combo { margin-left: 1px; }
.combo select { appearance: none; flex: 1; min-width: 0; height: 20px; padding: 0 20px 0 3px; }
.combo::after {
  content: "";
  position: absolute;
  right: 5px;
  top: 9px;
  width: 9px;
  height: 5px;
  background: #fff;
  clip-path: polygon(0 0, 100% 0, 50% 100%);
  pointer-events: none;
}
.combo select:disabled { color: #9a9fa8; opacity: 1; }
.combo:has(select:disabled)::after { background: #9a9fa8; }
.mono { font: 10px/16px var(--mono); }
.combo.mono select { padding-top: 2px; }
.w100 { width: 100px; }
.wlayer { width: 299px; padding-left: 3px; gap: 2px; }
.wlayer .swatch { margin-left: 3px; }
.wcolor { width: 155px; padding-left: 7px; }
.wline { width: 169px; padding-left: 6px; }
.wweight { width: 122px; padding-left: 5px; }
.wplot { width: 117px; }
.swatch { width: 12px; height: 12px; background: #fff; border: 1px solid #000; }
.rule { width: 40px; height: 1px; background: #fff; }
.rule.long { width: 62px; }

/* workspace */
.main { display: flex; flex: 1; min-height: 0; margin-top: 2px; padding-right: 2px; }
.work { flex: 1; min-width: 0; display: flex; flex-direction: column; margin-right: 4px; }
.upper { flex: 1; display: flex; padding-top: 1px; }
.side { width: 28px; flex: none; display: flex; flex-direction: column; gap: 1px; }
.vbar {
  padding: 7px 0 4px;
  background: linear-gradient(var(--edge) 2px, var(--bar) 2px 4px, var(--edge) 4px 6px, var(--bar) 6px);
  border-left: 1px solid var(--edge);
}
.vbar button { display: block; width: 27px; height: 23px; padding: 4px 0 3px 4px; }

.doc { flex: 1; min-width: 0; display: flex; flex-direction: column; margin: 0 2px; background: var(--dark); }
.doctabs { display: flex; gap: 1px; height: 23px; padding-left: 1px; }
.listbtn { width: 11px; background: #3f4a53; display: grid; place-items: center; }
.doctab {
  display: flex;
  align-items: center;
  gap: 2px;
  width: 173px;
  padding: 0 4px 0 2px;
  background: #54687f;
  font: bold 12px/16px var(--mono);
}
.doctab span { flex: 1; }
.doctab button svg { width: 12px; height: 12px; }
.newtab { width: 29px; background: #3d444e; display: grid; place-items: center; }

.canvas { position: relative; flex: 1; background: #222830; }
.drawing { position: absolute; inset: 0; width: 100%; height: 100%; }
.axis { fill: #fff; font: 300 31px "Open Sans", sans-serif; text-anchor: middle; }
.mdi { position: absolute; top: 8px; right: 9px; display: flex; gap: 8px; }
.mdi svg { width: 12px; height: 12px; }

.layouts { display: flex; gap: 2px; height: 16px; padding: 0 0 2px 1px; line-height: 12px; }
.layouts button { background: #3d444e; display: grid; place-items: center; height: 14px; }
.nav { width: 14px; }
.nav svg { width: 10px; height: 10px; fill: #9aa1ad; }
.lay { width: 51px; }
.layouts .on { width: 47px; background: #54687f; font-weight: bold; }
.lay.add { width: 30px; }

/* command line */
.command {
  display: flex;
  height: 150px;
  margin: 3px 0 1px;
  border: 1px solid var(--dark);
  background: var(--dark);
  color: #b9bfca;
  font: 16px/18px var(--ui);
}
.cmdclose { width: 21px; background: var(--bar); border-right: 1px solid var(--dark); padding: 2px 5px; }
.cmdclose button { display: block; }
.cmdclose svg { width: 12px; height: 12px; }
.cmdbody { flex: 1; min-width: 0; display: flex; flex-direction: column; border-left: 1px solid #4a525c; }
.history { flex: 1 1 0; min-height: 0; display: flex; border-bottom: 1px solid var(--rule); }
.lines { flex: 1; min-width: 0; overflow: hidden; }
.lines p { height: 18px; white-space: pre; }
code { font: 13px/18px var(--mono); }
.prompt { display: flex; align-items: flex-start; height: 23px; }
.prompt label { width: 50px; padding-top: 3px; }
.caret { width: 1px; height: 18px; background: #e6d9c4; }
.prompt input { flex: 1; }

.scroll {
  display: flex;
  flex-direction: column;
  align-items: center;
  width: 16px;
  padding: 7px 1px;
  background: #3a3f47;
}
.scroll svg { width: 10px; height: 6px; }
.space { flex: 1; }
.thumb { width: 13px; background: #525c66; flex: none; }
.tiny { height: 7px; margin-bottom: 5px; }
.mid { height: 68px; margin-top: 5px; }
.big { height: 142px; margin-top: 5px; }

/* docked panels */
.panel { display: flex; flex-direction: column; border: 2px solid var(--dark); background: var(--panel); }
.panel header {
  display: flex;
  align-items: center;
  justify-content: space-between;
  height: 22px;
  background: #525c66;
}
.panel h2 { font: bold 15px/20px var(--ui); }
.panel header svg { width: 12px; height: 12px; }
.calc { width: 280px; }
.calc header { padding: 0 8px 0 18px; }
.calcwrap { flex: 1 1 0; min-height: 0; display: flex; padding-right: 5px; }
.calcbody { flex: 1; min-width: 0; overflow: hidden; padding: 10px 5px 0 10px; }
.outer { width: 15px; margin-top: 30px; }

.calctools { display: flex; gap: 6px; padding-left: 5px; }
.calctools button { width: 20px; height: 20px; border: 1px solid #a0a0a0; display: grid; place-items: center; }
.display, .entry, .details { display: block; width: 100%; border: 1px solid #666; }
.display { height: 80px; margin-top: 15px; }
.entry { height: 20px; margin-top: 5px; }
.calc h3 { font: bold 15px/20px var(--ui); margin-top: 17px; padding-left: 2px; }
.calc .entry + h3 { margin-top: 10px; }
.calc h3.units { margin-top: 30px; }
.keys { display: grid; grid-template-columns: repeat(5, 36px); gap: 7px 10px; padding-left: 10px; }
.keys button { height: 20px; border: 1px solid #a0a0a0; line-height: 16px; text-align: center; white-space: nowrap; }

em { color: #4aa8f0; font: italic 20px/16px "Liberation Serif", serif; width: 16px; height: 18px; text-align: center; }
.vartools { display: flex; gap: 5px; padding-left: 10px; }
.vartools button { display: grid; width: 20px; height: 20px; border: 1px solid transparent; }
.vartools button > * { grid-area: 1 / 1; }
.vartools svg { width: 18px; height: 18px; }
.vartools .on { border-color: #a0a0a0; }
.gray { color: #9a9fa8; }

.tree { display: flex; height: 140px; border: 1px solid #666; overflow: hidden; }
.tree ul { flex: 1; }
.tree li { position: relative; display: flex; align-items: center; gap: 5px; height: 20px; padding-left: 41px; }
.tree li:not(.root)::before {
  content: "";
  position: absolute;
  left: 30px;
  top: 0;
  width: 11px;
  height: 10px;
  border: dotted #6a737d;
  border-width: 0 0 1px 1px;
}
.tree .root { padding-left: 7px; }
.tree .scroll { width: 17px; }
.minus { width: 9px; height: 9px; background: linear-gradient(#444, #444) center / 5px 1px no-repeat #fff; }
.k { width: 16px; text-align: center; color: #4aa8f0; font: bold 15px/18px "Liberation Serif", serif; }
.dlabel { display: block; height: 20px; line-height: 18px; padding-left: 2px; }
.details { width: auto; min-width: calc(100% - 4px); height: 80px; margin: 0 2px; }

table { border-collapse: separate; border-spacing: 0; table-layout: fixed; }
th { font-weight: normal; text-align: left; }
th, td { padding: 0; white-space: nowrap; overflow: hidden; }
.unit { width: 231px; margin-left: 5px; }
.unit th, .unit td { height: 21px; border: solid var(--rule); border-width: 0 1px 1px 0; }
.unit th { width: 101px; }
.unit th svg { float: left; margin: 0 2px 0 3px; }
.unit td { padding-left: 5px; }

/* properties */
.props { width: 225px; margin-left: 2px; }
.props header { padding: 0 8px 0 11px; }
.pick { display: flex; gap: 3px; padding: 8px 8px 0; height: 62px; }
.plain { flex: 1; height: 27px; background: none; border-color: var(--rule); }
.plain select { padding-left: 5px; }
.plain::after { top: 12px; right: 4px; width: 10px; }
.pick button { width: 21px; height: 21px; border: 1px solid #56606b; display: grid; place-items: center; }
.props h3 {
  display: flex;
  justify-content: space-between;
  align-items: center;
  height: 20px;
  margin: 0 33px 0 8px;
  padding: 0 6px 0 4px;
  border-bottom: 1px solid #e4e8ec;
  font-weight: bold;
  color: #e8ecf0;
}
.props h3 .tri { background: #e8ecf0; margin-top: 2px; }
.props table { width: 180px; margin: 1px 0 0 8px; color: #e2e6ea; }
.props table + h3 { margin-top: 29px; }
.props th, .props td { height: 25px; }
.props th { width: 68px; padding: 2px 0 0 5px; border: solid #566069; border-width: 0 1px 1px 0; }
.props td { padding: 0 0 1px 3px; border-bottom: 1px solid #566069; }
.dim td { color: #9aa2ab; }
td .swatch, td .rule { display: inline-block; margin-right: 3px; vertical-align: middle; }
td .swatch { width: 10px; height: 10px; }
td .rule { width: 45px; }
td .rule.short { width: 40px; }

/* status bar */
.status { display: flex; align-items: center; height: 25px; padding: 0 0 0 10px; }
.coords { width: 250px; margin-right: 3px; padding-top: 2px; font: 10px/18px var(--mono); border-bottom: 1px solid #4d545f; }
.modes { display: flex; gap: 4px; flex: 1; }
.modes button { width: 20px; height: 20px; display: grid; place-items: center; border: 1px solid transparent; }
.modes .on { background: #54687f; border-color: var(--blue); }
.units-status { display: flex; align-items: center; gap: 4px; width: 273px; color: #a9aeb6; }
.units-status .glyph { width: 18px; height: 18px; margin: 0 0 0 3px; }
.units-status .far { margin-left: 4px; }

/* object snap menu */
.popup {
  position: absolute;
  left: 365px;
  bottom: 26px;
  width: 220px;
  padding: 2px 3px 3px;
  background: linear-gradient(#666, #666) 28px 2px / 1px calc(100% - 5px) no-repeat #3a4049;
  border: 1px solid #9a9a9a;
}
.popup button { display: flex; align-items: center; gap: 5px; width: 212px; height: 24px; text-align: left; }
.popup button > :first-child { width: 16px; margin: 0 7px 0 3px; flex: none; }
.popup button > span { margin-left: -1px; }
.popup hr { height: 1px; margin: 3px 0 2px 26px; border: 0; background: #666; }
.popup :disabled { color: #686e77; }
.popup .hot { height: 22px; margin-top: 1px; background: linear-gradient(#1a78cc, #1a78cc) 25px 0 / 1px 100% no-repeat #2090ee; }
.arrow { position: absolute; left: 79px; bottom: 12px; width: 110px; height: 30px; }

/* floating overlays */
.watermark { position: absolute; right: 9px; bottom: 5px; display: flex; align-items: flex-end; line-height: 22px; opacity: .85; pointer-events: none; }
.watermark svg { width: 44px; height: 42px; }
.watermark div { display: flex; flex-direction: column; }
.watermark b { font-size: 21px; color: #1f66ac; }
.watermark span { padding-left: 2px; font-size: 17px; line-height: 20px; color: #3cae5a; }
.ime {
  position: absolute;
  right: 0;
  bottom: 0;
  display: flex;
  align-items: center;
  gap: 8px;
  height: 18px;
  width: 99px;
  padding-top: 4px;
  background: #fff;
}
.ime .sogou { width: 30px; height: 26px; margin: 0 -6px 8px -27px; }
.ime b { font-size: 14px; line-height: 14px; color: #1a73d9; }
```
